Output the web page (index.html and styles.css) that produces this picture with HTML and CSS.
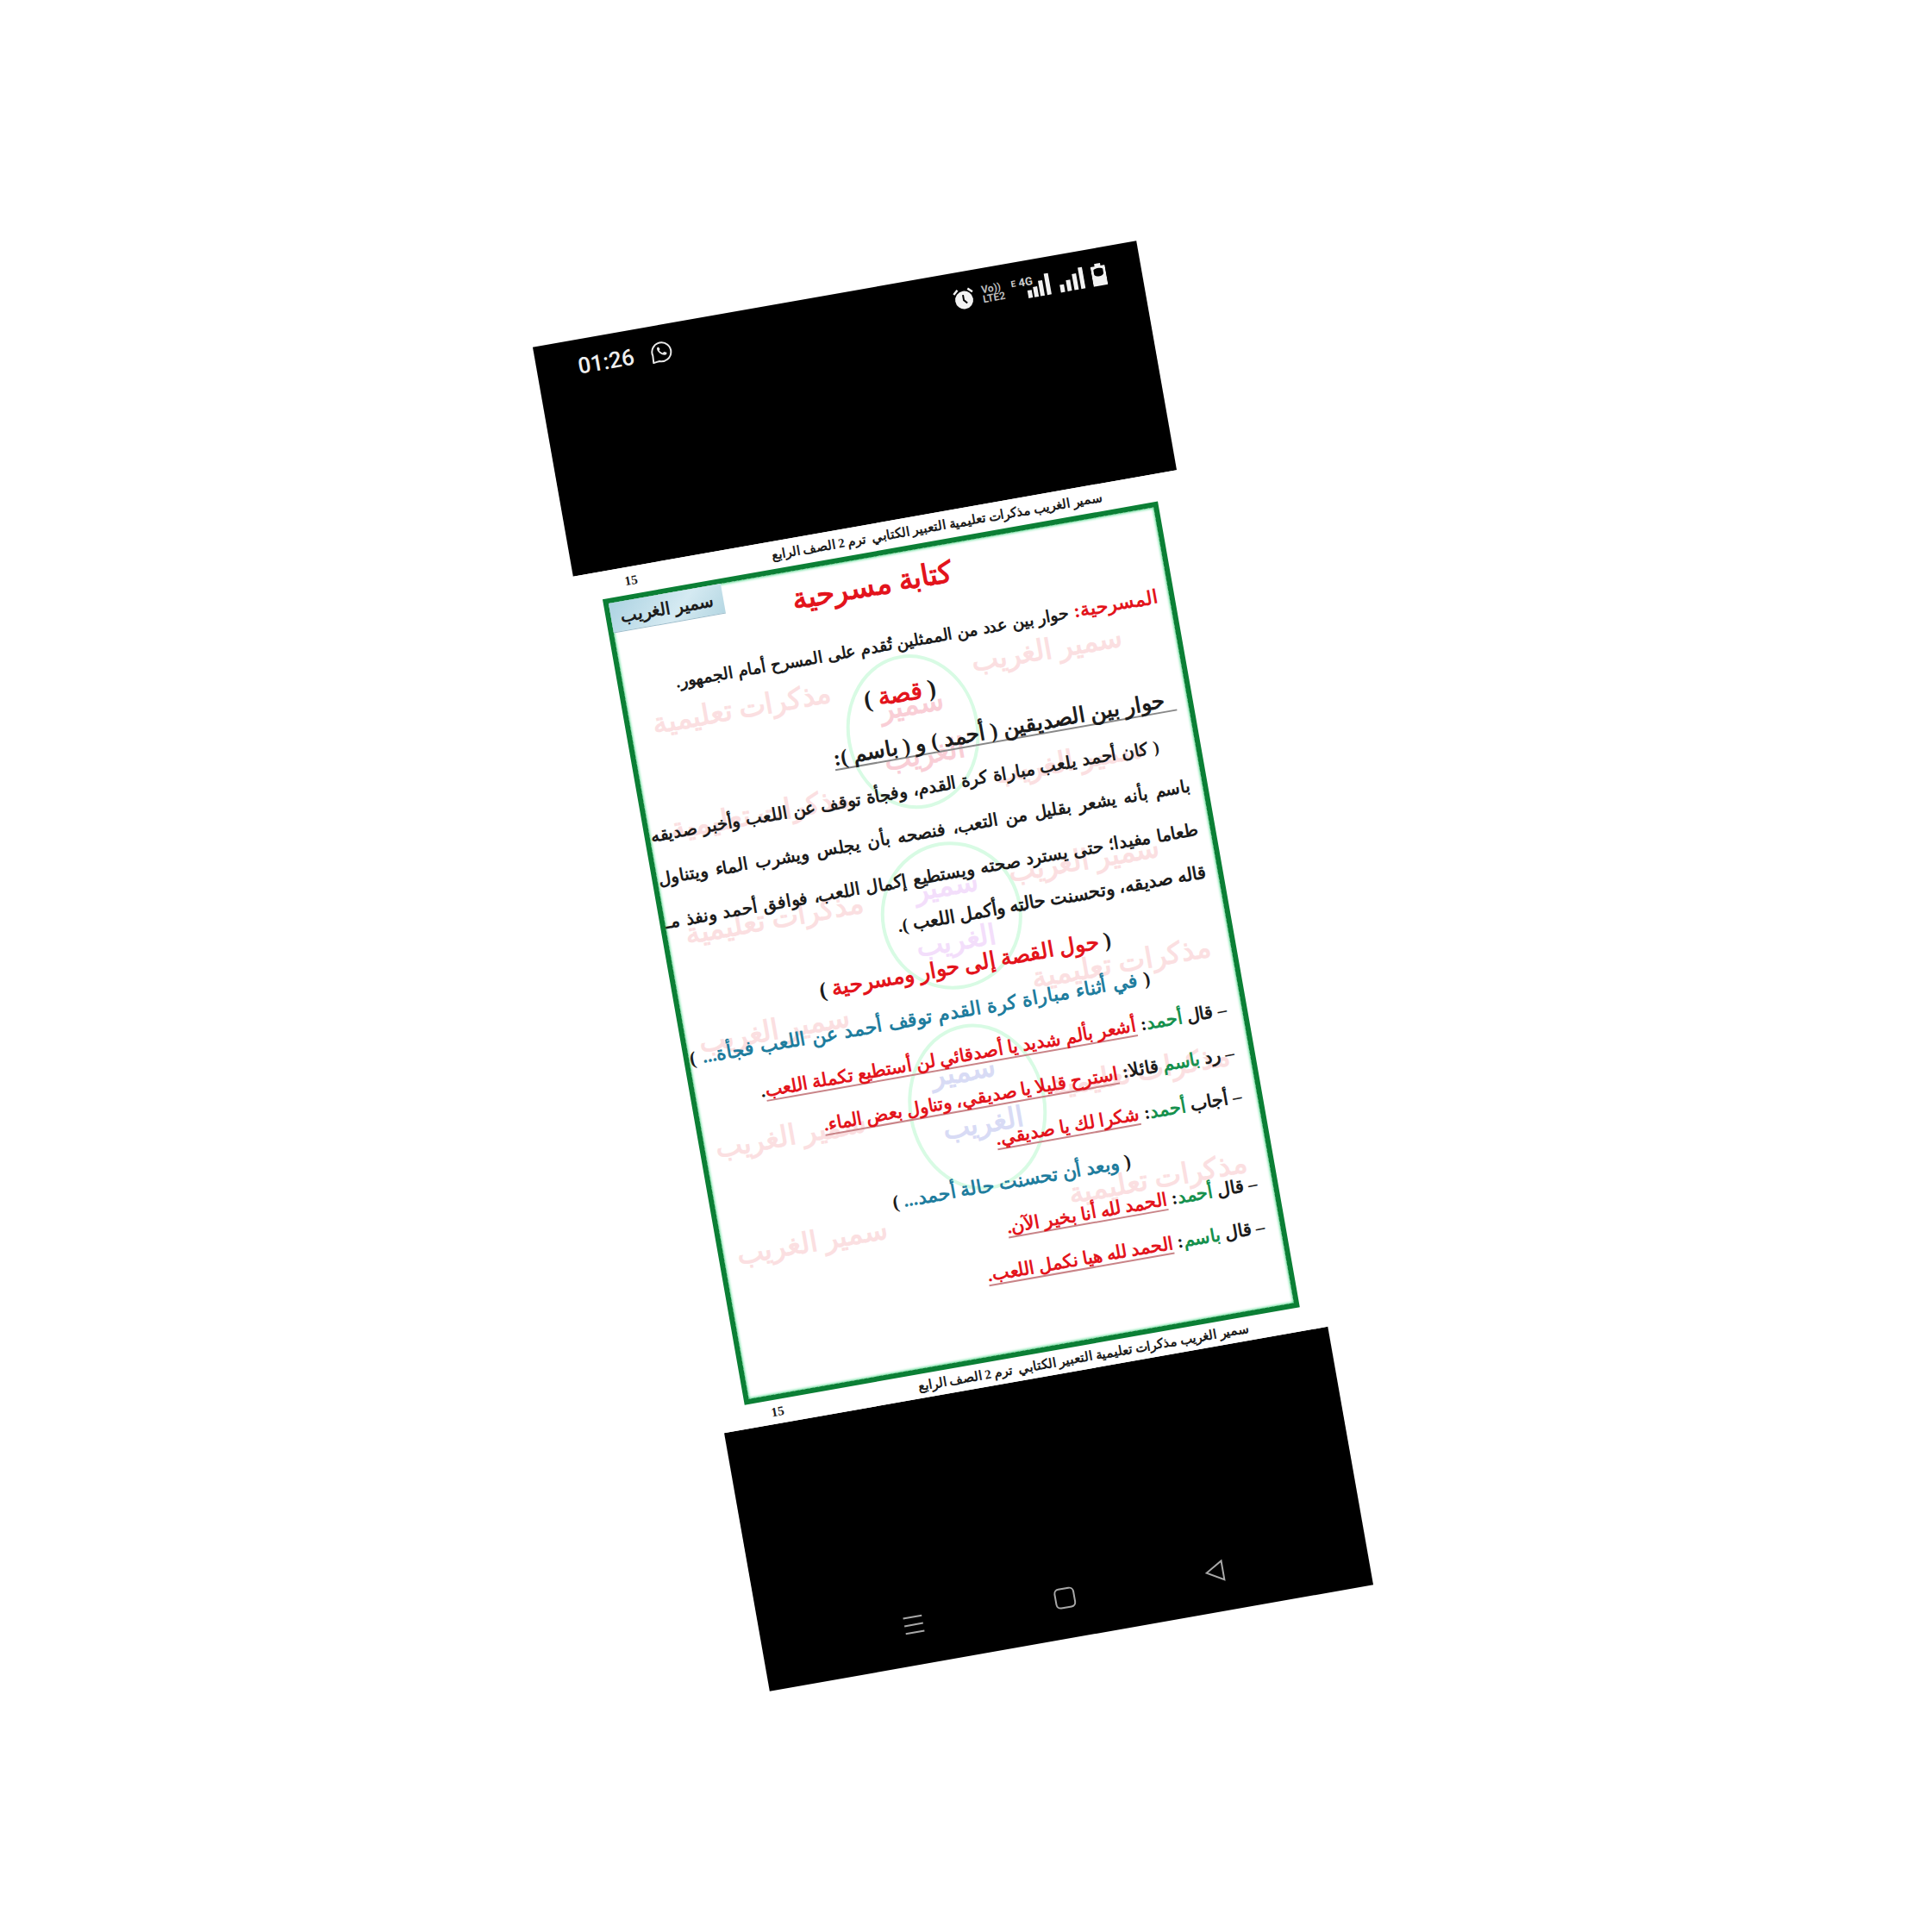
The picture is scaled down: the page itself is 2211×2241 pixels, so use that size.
FILE: index.html
```
<!DOCTYPE html>
<html lang="ar">
<head>
<meta charset="utf-8">
<meta name="viewport" content="width=device-width, initial-scale=1">
<title>كتابة مسرحية</title>
<link rel="stylesheet" href="styles.css">
</head>
<body>
<main class="phone">
  <header class="status">
    <div class="status-side">
      <time class="clock">01:26</time>
      <svg class="chat" width="26" height="26" viewBox="0 0 26 26" fill="none" stroke="#e8e8e8" stroke-width="2">
        <path d="M2 24.500 2.500 16A11 11 0 1 1 9 23.500Z" stroke-linejoin="round"/>
        <path d="M9 7.500C8 9 8.500 12 11 14.500s5.500 3.500 7.500 2.500l.5-2-3-1.500-1.500 1.300c-1.500-.6-3-2-3.700-3.600l1.200-1.300L10.800 7z" fill="#e8e8e8" stroke="none"/>
      </svg>
    </div>
    <div class="status-side status-icons">
      <svg width="25" height="26" viewBox="0 0 25 26">
        <circle cx="12.500" cy="15" r="10.500" fill="#f2f2f2"/>
        <path d="M1.500 7 6.500 2.500M23.500 7 18.500 2.500" stroke="#f2f2f2" stroke-width="2.500"/>
        <path d="M12 9v6l3.500 4" fill="none" stroke="#000" stroke-width="2"/>
      </svg>
      <span class="volte"><span>Vo))</span><span>LTE2</span></span>
      <svg width="46" height="28" viewBox="0 0 46 28">
        <text class="net" x="0" y="11">E</text>
        <text class="net net-big" x="9" y="12">4G</text>
        <path d="M20 18v9M27 15v12M34 9v18M42 2v25" stroke="#f2f2f2" stroke-width="5"/>
      </svg>
      <svg width="30" height="28" viewBox="0 0 30 28">
        <path d="M3 18v9M11 14v13M19 8v19M27 2v25" stroke="#f2f2f2" stroke-width="5"/>
      </svg>
      <svg width="17" height="28" viewBox="0 0 17 28">
        <path d="M5 1h7v3h5v23H0V4h5zM3 8v5c1 4 10 4 11 0V8c-2-2-9-2-11 0z" fill="#f2f2f2" fill-rule="evenodd"/>
      </svg>
    </div>
  </header>

  <article class="sheet" dir="rtl">
    <svg class="marks" viewBox="0 0 711 1010" aria-hidden="true">
      <g class="rings">
        <ellipse cx="357" cy="246" rx="75" ry="88"/>
        <ellipse cx="364" cy="464" rx="80" ry="84"/>
        <ellipse cx="355" cy="688" rx="78" ry="95"/>
      </g>
      <g class="mark pink">
        <text x="527" y="190">سمير الغريب</text>
        <text x="166" y="196">مذكرات تعليمية</text>
        <text x="529" y="322">سمير الغريب</text>
        <text x="166" y="320">مذكرات تعليمية</text>
        <text x="527" y="438">سمير الغريب</text>
        <text x="161" y="443">مذكرات تعليمية</text>
        <text x="549" y="563">مذكرات تعليمية</text>
        <text x="138" y="570">سمير الغريب</text>
        <text x="549" y="691">مذكرات تعليمية</text>
        <text x="136" y="694">سمير الغريب</text>
        <text x="547" y="817">مذكرات تعليمية</text>
        <text x="139" y="820">سمير الغريب</text>
      </g>
      <g class="mark rose"><text x="361" y="226">سمير</text><text x="366" y="285">الغريب</text></g>
      <g class="mark violet"><text x="364" y="440">سمير</text><text x="364" y="505">الغريب</text></g>
      <g class="mark indigo"><text x="346" y="656">سمير</text><text x="358" y="719">الغريب</text></g>
    </svg>

    <div class="running head">
      <span>سمير الغريب مذكرات تعليمية التعبير الكتابي &nbsp;ترم 2 الصف الرابع</span>
      <span>15</span>
    </div>

    <section class="frame">
      <div class="badge">سمير الغريب</div>
      <h1 class="title">كتابة مسرحية</h1>
      <p class="line full definition"><b class="term">المسرحية:</b> حوار بين عدد من الممثلين تُقدم على المسرح أمام الجمهور.</p>
      <h2 class="line story">( <span class="red">قصة</span> )</h2>
      <h3 class="line subject"><span>&nbsp;&nbsp;حوار بين الصديقين ( أحمد ) و ( باسم ):</span></h3>
      <p class="line tale full first">( كان أحمد يلعب مباراة كرة القدم، وفجأة توقف عن اللعب وأخبر صديقه</p>
      <p class="line tale full">باسم بأنه يشعر بقليل من التعب، فنصحه بأن يجلس ويشرب الماء ويتناول</p>
      <p class="line tale full">طعاما مفيدا؛ حتى يسترد صحته ويستطيع إكمال اللعب، فوافق أحمد ونفذ مـ</p>
      <p class="line tale last">قاله صديقه، وتحسنت حالته وأكمل اللعب ).</p>
      <h2 class="line task">( <span class="red">حول القصة إلى حوار ومسرحية</span> )</h2>
      <p class="line full scene">( <span class="blue">في أثناء مباراة كرة القدم توقف أحمد عن اللعب فجأة...</span> )</p>
      <p class="line talk">– قال <span class="green">أحمد</span>: <u>أشعر بألم شديد يا أصدقائي لن أستطيع تكملة اللعب</u>.</p>
      <p class="line talk">– رد <span class="green">باسم</span> قائلا: <u>استرح قليلا يا صديقي، وتناول بعض الماء.</u></p>
      <p class="line talk">– أجاب <span class="green">أحمد</span>: <u>شكرا لك يا صديقي.</u></p>
      <p class="line scene second">( <span class="blue">وبعد أن تحسنت حالة أحمد...</span> )</p>
      <p class="line talk">– قال <span class="green">أحمد</span>: <u>الحمد لله أنا بخير الآن.</u></p>
      <p class="line talk">– قال <span class="green">باسم</span>: <u>الحمد لله هيا نكمل اللعب.</u></p>
    </section>

    <div class="running foot">
      <span>سمير الغريب مذكرات تعليمية التعبير الكتابي &nbsp;ترم 2 الصف الرابع</span>
      <span>15</span>
    </div>
  </article>

  <nav class="keys">
    <button type="button" aria-label="Recent apps">
      <svg width="26" height="26" viewBox="0 0 26 26"><path d="M2 4h22M2 13h22M2 22h22"/></svg>
    </button>
    <button type="button" aria-label="Home">
      <svg width="26" height="26" viewBox="0 0 26 26"><rect x="2" y="2" width="22" height="22" rx="5"/></svg>
    </button>
    <button type="button" aria-label="Back">
      <svg width="26" height="26" viewBox="0 0 26 26"><path d="M22 2v22L3 13z"/></svg>
    </button>
  </nav>
</main>
</body>
</html>
```
FILE: styles.css
```
* {
  box-sizing: border-box;
}

body {
  margin: 0;
  min-height: 100vh;
  display: grid;
  place-items: center;
  overflow: hidden;
  background: #fff;
}

h1, h2, h3, p {
  margin: 0;
  font-weight: 700;
}

.phone {
  width: 100%;
  max-width: 711px;
  transform: rotate(-10deg);
}

/* status bar */
.status {
  display: flex;
  justify-content: space-between;
  align-items: center;
  padding: 17px 41px 225px 48px;
  background: #000;
}

.status-side {
  display: flex;
  align-items: center;
  gap: 19px;
  height: 28px;
}

.status-icons {
  gap: 9px;
}

.clock {
  font: 500 26px/28px Roboto, sans-serif;
  color: #eee;
}

.volte {
  display: flex;
  flex-direction: column;
  width: 26px;
  font: 700 12px/11px Roboto, sans-serif;
  color: #bbb;
}

.net {
  font: 700 10px Roboto, sans-serif;
  fill: #ccc;
}

.net-big {
  font-size: 13px;
}

/* document page */
.sheet {
  position: relative;
  z-index: 0;
  padding: 0 28px 0 29px;
  background: #fff;
  color: #1c1c1c;
  font-family: "Liberation Serif", serif;
  white-space: nowrap;
}

.marks {
  position: absolute;
  inset: 0;
  z-index: -1;
  width: 100%;
  height: 100%;
}

.rings {
  fill: none;
  stroke: #d8fbe4;
  stroke-width: 4;
}

.mark {
  font-size: 33px;
  font-weight: 700;
  text-anchor: middle;
}

.pink {
  fill: #fbdfe1;
}

.rose {
  fill: #f9ced6;
}

.violet {
  fill: #f3defb;
}

.indigo {
  fill: #d8dbf5;
}

.running {
  display: flex;
  justify-content: space-between;
  padding: 0 62px 0 29px;
  font-size: 15px;
  font-weight: 700;
}

.head {
  line-height: 32px;
}

.foot {
  line-height: 28px;
}

.frame {
  position: relative;
  padding: 0 14px 67px 1px;
  border: 6px solid #0b7f35;
  box-shadow: inset 0 0 3px 1px #5fdc95;
}

.badge {
  position: absolute;
  top: 0;
  left: 0;
  width: 132px;
  font-size: 20px;
  font-weight: 700;
  line-height: 34px;
  text-align: center;
  background: linear-gradient(135deg, #add3e2, #d5eaf2 60%, #b5d7e3);
  border-bottom: 1px solid #9bbccb;
}

.title {
  padding-right: 20px;
  font-size: 34px;
  line-height: 66px;
  text-align: center;
  color: #e3141c;
}

.line {
  font-size: 20px;
  line-height: 52px;
}

.full {
  text-align-last: justify;
}

.definition {
  margin-top: 12px;
  padding-left: 60px;
  font-size: 19px;
}

.term {
  font-size: 22px;
  line-height: 22px;
  color: #e3141c;
}

.story {
  margin-top: 6px;
  font-size: 28px;
  text-align: center;
}

.subject {
  margin-top: 9px;
  font-size: 25px;
}

.subject span,
.talk u {
  text-decoration: underline 2px #888;
  text-decoration-skip-ink: none;
  text-underline-offset: 4px;
}

.tale {
  line-height: 51px;
}

.first {
  padding-right: 28px;
}

.last {
  font-size: 21px;
}

.task {
  margin-top: 6px;
  padding-right: 122px;
  font-size: 25px;
}

.scene {
  padding-right: 85px;
  font-size: 22px;
}

.second {
  padding-right: 144px;
}

.talk {
  padding-right: 4px;
  font-size: 21px;
  line-height: 51px;
}

.talk u {
  color: #e3141c;
  text-decoration-color: #c98488;
}

.red {
  color: #e3141c;
}

.blue {
  color: #1f7d9e;
}

.green {
  color: #16914e;
}

/* navigation keys */
.keys {
  display: flex;
  justify-content: space-evenly;
  padding: 244px 0 34px;
  background: #000;
}

.keys button {
  display: block;
  width: 26px;
  height: 26px;
  margin: 0 -13px;
  padding: 0;
  border: 0;
  background: none;
}

.keys svg {
  display: block;
  fill: none;
  stroke: #a8a8a8;
  stroke-width: 2;
}
```
